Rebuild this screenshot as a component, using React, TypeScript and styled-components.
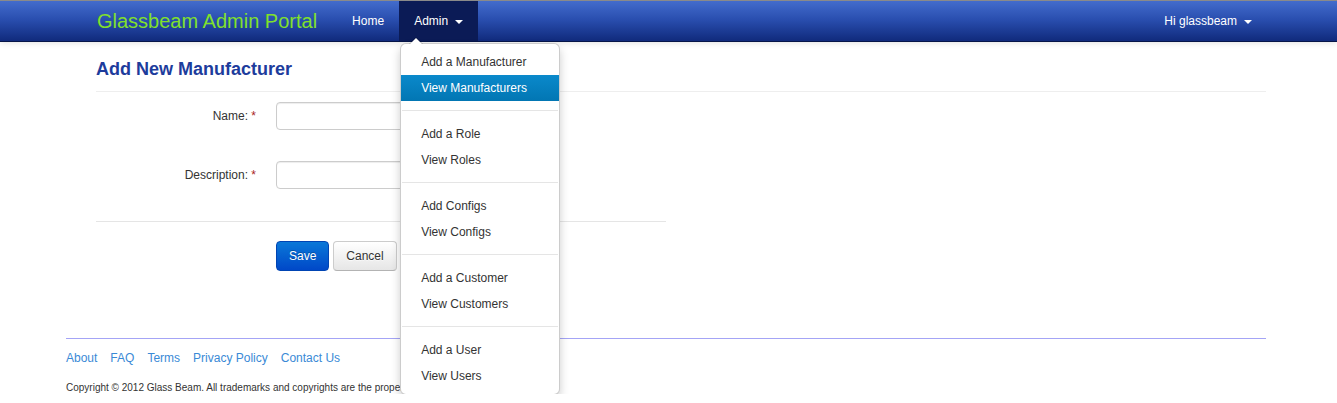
import React from "react";
import styled, { createGlobalStyle, css } from "styled-components";

const GlobalStyle = createGlobalStyle`
  html, body { margin: 0; padding: 0; background: #fff; }
  body {
    font-family: "Liberation Sans", Arial, Helvetica, sans-serif;
    font-size: 12px;
    line-height: 18px;
    color: #333;
  }
  * { box-sizing: border-box; }
`;

const Navbar = styled.header`
  position: relative;
  z-index: 10;
  border-top: 1px solid #8a8a8a;
  border-bottom: 1px solid #061548;
  background: linear-gradient(to bottom, #436ccc 0%, #2a4fb0 45%, #102a7c 100%);
  box-shadow: 0 1px 6px rgba(0, 0, 0, 0.12);
`;

const NavContainer = styled.div`
  width: 1170px;
  margin-left: 97px;
  height: 40px;
  display: flex;
  align-items: stretch;
`;

const Brand = styled.a`
  display: block;
  margin-left: -20px;
  padding: 10px 20px;
  font-size: 20px;
  line-height: 20px;
  color: #80e02c;
  text-decoration: none;
`;

const Nav = styled.ul`
  display: flex;
  list-style: none;
  margin: 0;
  padding: 0;
`;

const NavRight = styled(Nav)`
  margin-left: auto;
`;

const NavItem = styled.li<{ $active?: boolean }>`
  position: relative;
  display: flex;
  ${(p) =>
    p.$active &&
    css`
      background: #0b1b56;
    `}
`;

const NavLink = styled.a`
  display: flex;
  align-items: center;
  padding: 10px 15px;
  line-height: 20px;
  color: #fff;
  text-decoration: none;
  font-size: 12px;
`;

const Caret = styled.span`
  display: inline-block;
  width: 0;
  height: 0;
  margin-left: 7px;
  margin-top: 1px;
  border-top: 4px solid #fff;
  border-left: 4px solid transparent;
  border-right: 4px solid transparent;
`;

const Dropdown = styled.ul`
  position: absolute;
  top: 42px;
  left: 1px;
  width: 160px;
  margin: 0;
  padding: 5px 0;
  list-style: none;
  background: #fff;
  border: 1px solid rgba(0, 0, 0, 0.2);
  border-radius: 6px;
  box-shadow: 0 5px 10px rgba(0, 0, 0, 0.2);

  &::before {
    content: "";
    position: absolute;
    top: -7px;
    left: 8px;
    border-left: 7px solid transparent;
    border-right: 7px solid transparent;
    border-bottom: 7px solid rgba(0, 0, 0, 0.2);
  }
  &::after {
    content: "";
    position: absolute;
    top: -6px;
    left: 9px;
    border-left: 6px solid transparent;
    border-right: 6px solid transparent;
    border-bottom: 6px solid #fff;
  }
`;

const DropItem = styled.li<{ $active?: boolean }>`
  display: block;
  padding: 3px 20px;
  line-height: 20px;
  white-space: nowrap;
  color: #333;
  ${(p) =>
    p.$active &&
    css`
      color: #fff;
      background: linear-gradient(to bottom, #0a89cb, #0276b3);
    `}
`;

const Divider = styled.li`
  height: 1px;
  margin: 9px 1px;
  background: #e5e5e5;
  border-bottom: 1px solid #fff;
  box-sizing: content-box;
`;

const Container = styled.div`
  width: 1200px;
  margin-left: 66px;
`;

const Content = styled.main`
  padding-left: 30px;
`;

const PageHeader = styled.h1`
  margin: 17px 0 0;
  padding-bottom: 12px;
  border-bottom: 1px solid #eee;
  font-size: 18px;
  line-height: 20px;
  font-weight: bold;
  color: #1d3c9c;
`;

const Form = styled.form`
  width: 570px;
  padding-top: 10px;
`;

const ControlGroup = styled.div`
  display: flex;
  margin-bottom: 31px;
`;

const Label = styled.label`
  width: 160px;
  padding-top: 5px;
  text-align: right;
  line-height: 18px;
  color: #333;
`;

const Required = styled.span`
  color: #a8241c;
`;

const Controls = styled.div`
  margin-left: 20px;
`;

const Input = styled.input`
  display: block;
  width: 220px;
  height: 28px;
  padding: 4px 6px;
  font-family: inherit;
  font-size: 12px;
  line-height: 18px;
  border: 1px solid #ccc;
  border-radius: 4px;
  box-shadow: inset 0 1px 1px rgba(0, 0, 0, 0.075);
  background: #fff;
`;

const FormActions = styled.div`
  display: flex;
  gap: 4px;
  margin-top: 32px;
  padding: 19px 0 20px 180px;
  border-top: 1px solid #e5e5e5;
`;

const Button = styled.button<{ $primary?: boolean }>`
  height: 30px;
  padding: 4px 12px;
  font-family: inherit;
  font-size: 12px;
  line-height: 20px;
  border-radius: 4px;
  cursor: pointer;
  ${(p) =>
    p.$primary
      ? css`
          color: #fff;
          border: 1px solid #0044b3;
          background: linear-gradient(to bottom, #0a78d8, #0048c8);
          text-shadow: 0 -1px 0 rgba(0, 0, 0, 0.25);
        `
      : css`
          color: #333;
          border: 1px solid #ccc;
          border-bottom-color: #b3b3b3;
          background: linear-gradient(to bottom, #ffffff, #e6e6e6);
          text-shadow: 0 1px 1px rgba(255, 255, 255, 0.75);
        `}
`;

const Footer = styled.footer`
  margin-top: 47px;
  padding-top: 10px;
  border-top: 1px solid #a4a4f6;
`;

const FooterLinks = styled.nav`
  display: flex;
  gap: 13px;
  line-height: 18px;
`;

const FooterLink = styled.a`
  color: #3a8ad6;
  text-decoration: none;
`;

const Copyright = styled.p`
  margin: 15px 0 0;
  font-size: 10px;
  line-height: 12px;
  color: #333;
`;

const menu: (string | null)[] = [
  "Add a Manufacturer",
  "View Manufacturers",
  null,
  "Add a Role",
  "View Roles",
  null,
  "Add Configs",
  "View Configs",
  null,
  "Add a Customer",
  "View Customers",
  null,
  "Add a User",
  "View Users",
];

export default function App() {
  return (
    <>
      <GlobalStyle />
      <Navbar>
        <NavContainer>
          <Brand href="#">Glassbeam Admin Portal</Brand>
          <Nav>
            <NavItem>
              <NavLink href="#">Home</NavLink>
            </NavItem>
            <NavItem $active>
              <NavLink href="#">
                Admin
                <Caret />
              </NavLink>
              <Dropdown>
                {menu.map((m, i) =>
                  m === null ? (
                    <Divider key={i} />
                  ) : (
                    <DropItem key={i} $active={m === "View Manufacturers"}>
                      {m}
                    </DropItem>
                  )
                )}
              </Dropdown>
            </NavItem>
          </Nav>
          <NavRight>
            <NavItem>
              <NavLink href="#">
                Hi glassbeam
                <Caret />
              </NavLink>
            </NavItem>
          </NavRight>
        </NavContainer>
      </Navbar>
      <Container>
        <Content>
          <PageHeader>Add New Manufacturer</PageHeader>
          <Form>
            <ControlGroup>
              <Label>
                Name: <Required>*</Required>
              </Label>
              <Controls>
                <Input type="text" />
              </Controls>
            </ControlGroup>
            <ControlGroup>
              <Label>
                Description: <Required>*</Required>
              </Label>
              <Controls>
                <Input type="text" />
              </Controls>
            </ControlGroup>
            <FormActions>
              <Button type="button" $primary>
                Save
              </Button>
              <Button type="button">Cancel</Button>
            </FormActions>
          </Form>
        </Content>
        <Footer>
          <FooterLinks>
            <FooterLink href="#">About</FooterLink>
            <FooterLink href="#">FAQ</FooterLink>
            <FooterLink href="#">Terms</FooterLink>
            <FooterLink href="#">Privacy Policy</FooterLink>
            <FooterLink href="#">Contact Us</FooterLink>
          </FooterLinks>
          <Copyright>
            Copyright © 2012 Glass Beam. All trademarks and copyrights are the property of their respective owners.
          </Copyright>
        </Footer>
      </Container>
    </>
  );
}
